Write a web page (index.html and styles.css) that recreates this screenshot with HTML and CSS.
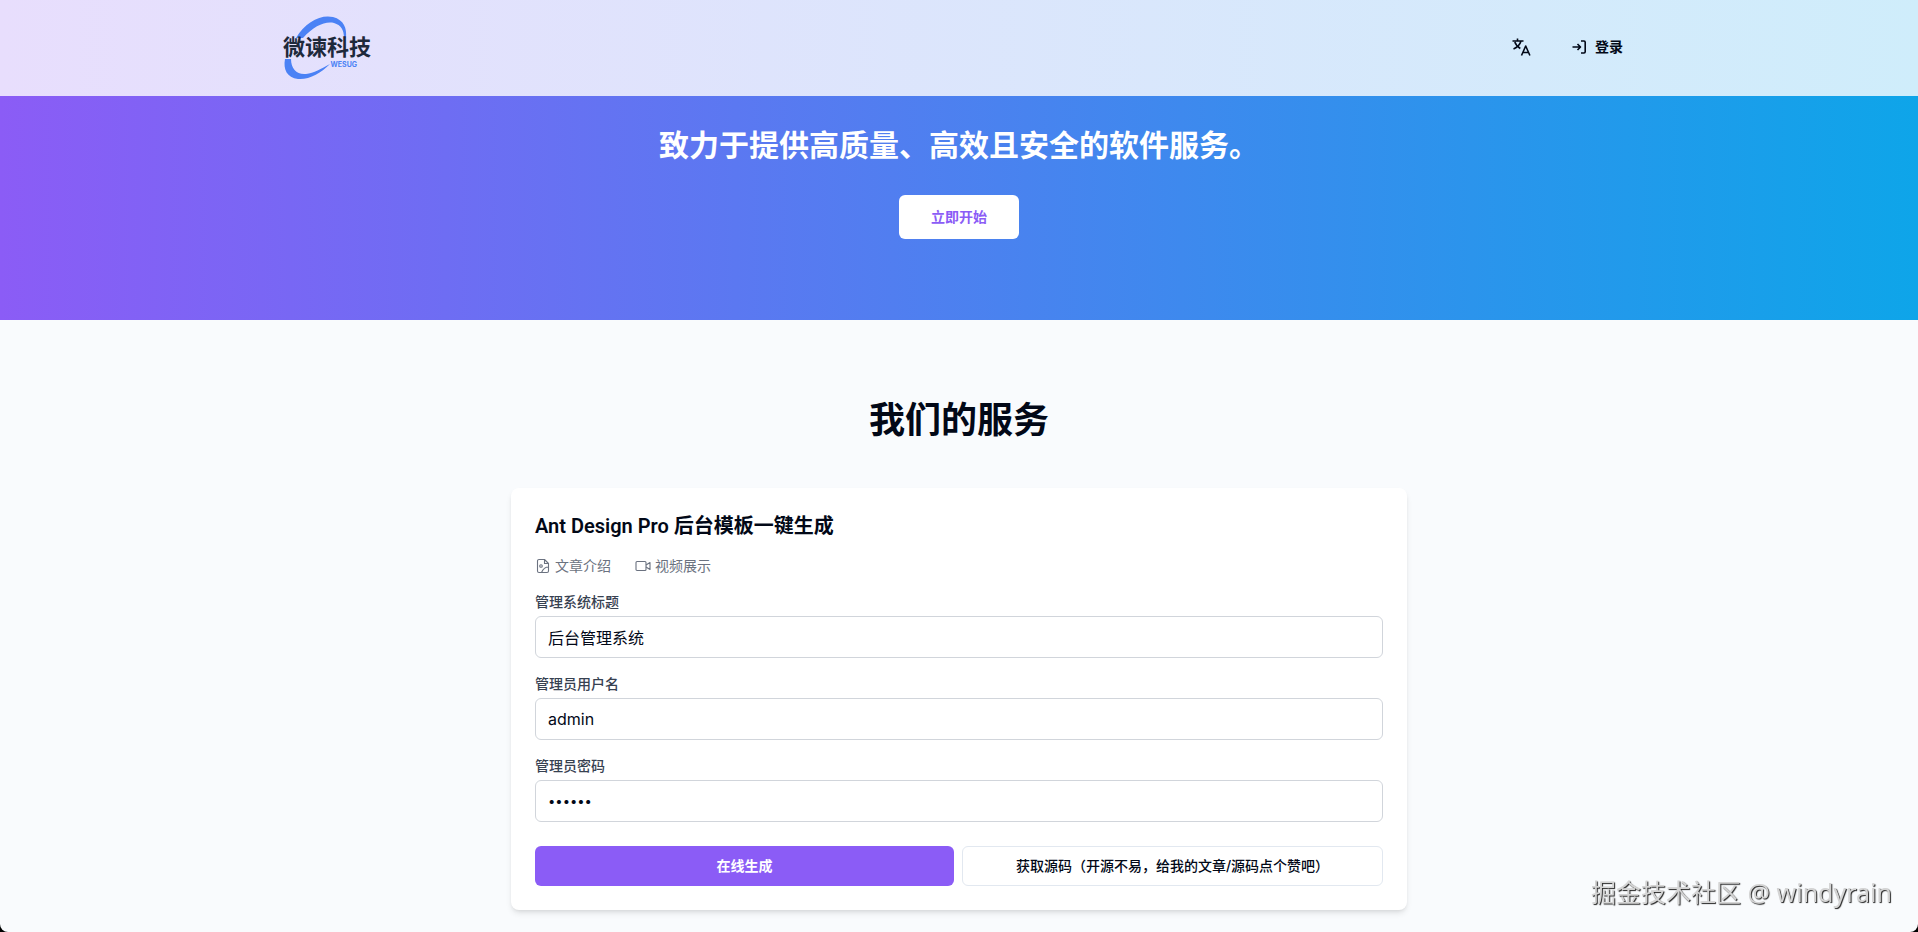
FILE: index.html
```
<!DOCTYPE html>
<html lang="zh-CN">

<head>
    <meta charset="UTF-8">
    <title>微谏科技</title>
    <link rel="stylesheet" href="styles.css">
</head>

<body>

    <header class="header">
        <div class="container">
            <a href="#" class="logo">
                <svg class="logo-ring" viewBox="0 0 96 72" aria-hidden="true">
                    <path d="M13 25 C22 9 38 1 50 4 C61 7 64 15 63 25 L61 25 C61 17 58 12 51 10 C42 8 31 13 20 25 Z" />
                    <path d="M2 46 L8 46 C8 56 14 62 23 61 C31 60 38 56 47 51 C38 60 26 67 15 66 C4 65 0 56 2 46 Z" />
                </svg>
                <span class="logo-name">微谏科技</span>
                <span class="logo-sub">WESUG</span>
            </a>
            <nav class="nav">
                <button type="button" class="nav-btn" aria-label="切换语言">
                    <svg viewBox="0 0 20 20" width="20" height="20" class="icon-line" aria-hidden="true">
                        <path d="M6.5 1.5v2M1.5 4h11M10 4c-1 3.5-4 6.5-7.5 8M3.8 5c1 3 3 5 5.500 6.500" />
                        <path d="M10.5 18.5l4.2-9.5 4.2 9.5M12 15.5h5.4" />
                    </svg>
                </button>
                <a href="#login" class="nav-btn">
                    <svg viewBox="0 0 16 16" width="16" height="16" class="icon-line" aria-hidden="true">
                        <path d="M10 2h3a1.2 1.2 0 0 1 1.2 1.2v9.6a1.2 1.2 0 0 1-1.2 1.2h-3M1.5 8h8M6.5 5l3 3-3 3" />
                    </svg>
                    登录
                </a>
            </nav>
        </div>
    </header>

    <section class="hero">
        <p class="hero-text">致力于提供高质量、高效且安全的软件服务。</p>
        <a href="#services" class="hero-btn">立即开始</a>
    </section>

    <main id="services" class="services">
        <h2>我们的服务</h2>

        <form class="card">
            <h3>Ant Design Pro 后台模板一键生成</h3>

            <div class="links">
                <a href="#article">
                    <svg viewBox="0 0 16 16" width="16" height="16" class="icon-thin" aria-hidden="true">
                        <path d="M9.5 1.5H4A1.5 1.5 0 0 0 2.5 3v10A1.5 1.5 0 0 0 4 14.5h8a1.5 1.5 0 0 0 1.5-1.5V5.5zM9.5 1.5v4h4M13.5 9c-4 0-5.5 2-7 5.5" />
                        <circle cx="6" cy="8" r="1.3" />
                    </svg>
                    文章介绍
                </a>
                <a href="#video">
                    <svg viewBox="0 0 16 16" width="16" height="16" class="icon-thin" aria-hidden="true">
                        <path d="M11 7l4-2.5v7L11 9" />
                        <rect x="1" y="3.5" width="10" height="9" rx="1" />
                    </svg>
                    视频展示
                </a>
            </div>

            <div class="field">
                <label for="title">管理系统标题</label>
                <input type="text" id="title" value="后台管理系统">
            </div>
            <div class="field">
                <label for="username">管理员用户名</label>
                <input type="text" id="username" value="admin">
            </div>
            <div class="field">
                <label for="password">管理员密码</label>
                <input type="password" id="password" value="123456">
            </div>

            <div class="actions">
                <button type="button" class="btn btn-primary">在线生成</button>
                <button type="button" class="btn btn-outline">获取源码（开源不易，给我的文章/源码点个赞吧）</button>
            </div>
        </form>
    </main>

    <div class="watermark">掘金技术社区 @ windyrain</div>

</body>

</html>
```
FILE: styles.css
```
* {
    box-sizing: border-box;
}

html {
    background-color: #000;
}

body {
    min-height: 100vh;
    margin: 0;
    border-radius: 0 0 8px 8px;
    background-color: #f9fbfd;
    color: #020817;
    font-family: Inter, "Noto Sans CJK SC", sans-serif;
    font-size: 16px;
    line-height: 24px;
}

h2,
h3,
p {
    margin: 0;
}

a {
    color: inherit;
    text-decoration: none;
}

button,
input {
    font: inherit;
    color: inherit;
}

/* Header */
.header {
    background: linear-gradient(to right, #e8defd, #cfedfb);
}

.container {
    display: flex;
    align-items: center;
    justify-content: space-between;
    max-width: 1400px;
    height: 96px;
    margin: 0 auto;
    padding: 0 24px 2px;
}

.logo {
    position: relative;
    display: flex;
    flex-direction: column;
    height: 72px;
    padding-top: 22px;
    color: #1e293b;
}

.logo-ring {
    position: absolute;
    top: 2px;
    left: 0;
    width: 96px;
    height: 72px;
    fill: #4b82f5;
}

.logo-name {
    position: relative;
    font-size: 22px;
    font-weight: 600;
    line-height: 28px;
}

.logo-sub {
    align-self: flex-end;
    margin-right: 14px;
    color: #4b82f5;
    font-size: 7px;
    font-weight: 700;
    line-height: 8px;
}

.nav {
    display: flex;
    align-items: center;
    gap: 16px;
}

.nav-btn {
    display: flex;
    align-items: center;
    gap: 8px;
    padding: 10px 12px;
    border: none;
    background: none;
    font-size: 14px;
    font-weight: 600;
    line-height: 20px;
}

.icon-line,
.icon-thin {
    fill: none;
    stroke: currentColor;
    stroke-width: 1.6;
    stroke-linejoin: round;
}

.icon-thin {
    stroke-width: 1.1;
}

/* Hero */
.hero {
    display: flex;
    flex-direction: column;
    align-items: center;
    gap: 32px;
    padding: 31px 16px 81px;
    background: linear-gradient(to right, #8b5cf6, #0ea5e9);
}

.hero-text {
    color: #fff;
    font-size: 30px;
    font-weight: 700;
    line-height: 36px;
}

.hero-btn {
    padding: 12px 32px;
    border-radius: 6px;
    background-color: #fff;
    color: #8b5cf6;
    font-size: 14px;
    font-weight: 600;
    line-height: 20px;
}

/* Services */
.services {
    max-width: 928px;
    margin: 0 auto;
    padding: 80px 16px 16px;
}

.services h2 {
    margin-bottom: 48px;
    font-size: 36px;
    font-weight: 700;
    line-height: 40px;
    text-align: center;
}

.card {
    padding: 24px;
    border-radius: 8px;
    background-color: #fff;
    box-shadow: 0 4px 6px -1px rgba(0, 0, 0, 0.1), 0 2px 4px -2px rgba(0, 0, 0, 0.1);
}

.card h3 {
    font-family: Roboto, "Noto Sans CJK SC", sans-serif;
    font-size: 20px;
    font-weight: 600;
    line-height: 28px;
}

.links {
    display: flex;
    gap: 24px;
    margin-top: 16px;
    color: #6b7280;
    font-size: 14px;
    line-height: 20px;
}

.links a {
    display: flex;
    align-items: center;
    gap: 4px;
}

.field {
    margin-top: 16px;
}

.field label {
    display: block;
    margin-bottom: 4px;
    color: #374151;
    font-size: 14px;
    font-weight: 500;
    line-height: 20px;
}

.field input {
    display: block;
    width: 100%;
    height: 42px;
    padding: 8px 12px;
    border: 1px solid #d1d5db;
    border-radius: 6px;
    background-color: #fff;
}

.field input[type="password"] {
    font-size: 13px;
}

.actions {
    display: flex;
    gap: 8px;
    margin-top: 24px;
}

.btn {
    flex: 1;
    height: 40px;
    padding: 8px 16px;
    border: none;
    border-radius: 6px;
    font-size: 14px;
    font-weight: 600;
    line-height: 20px;
}

.btn-primary {
    background-color: #8b5cf6;
    color: #fff;
}

.btn-outline {
    border: 1px solid #e2e8f0;
    background-color: #fff;
    font-weight: 500;
}

/* Watermark */
.watermark {
    position: fixed;
    right: 26px;
    bottom: 24px;
    color: #d4d4d4;
    font-family: "Noto Sans", "Noto Sans CJK SC", sans-serif;
    font-size: 25px;
    line-height: 32px;
    text-shadow: 1px 1px 1px #222;
}
```
